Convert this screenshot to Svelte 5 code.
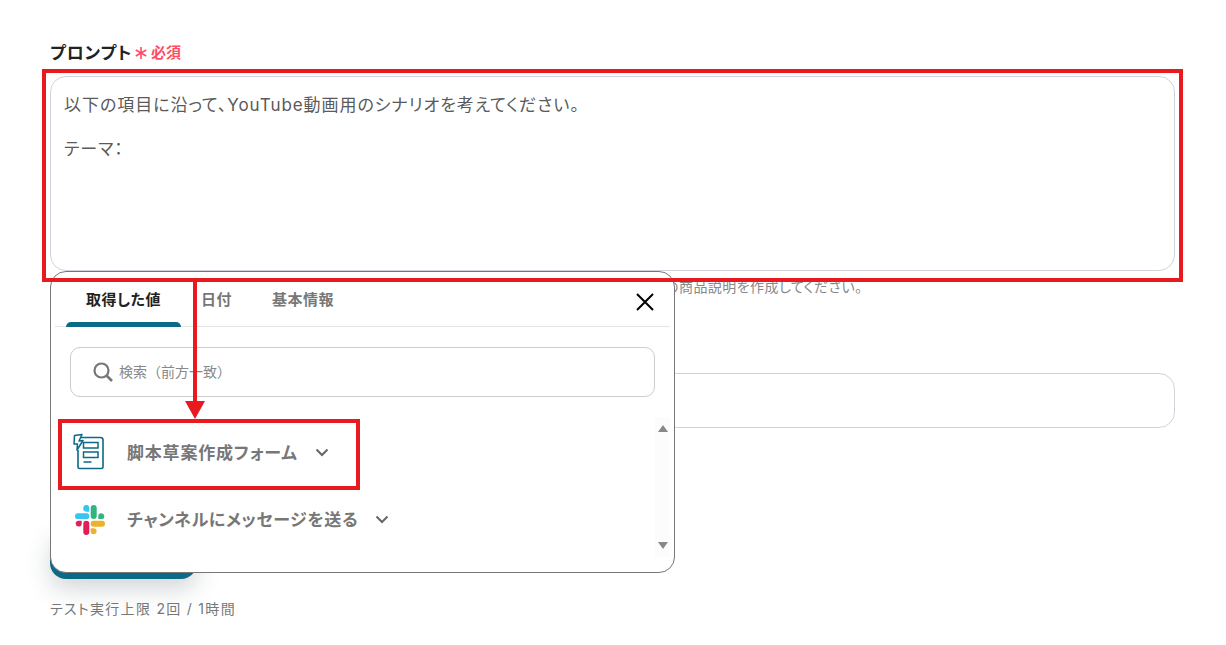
<script>
  const tabs = [
    { label: '取得した値', active: true },
    { label: '日付', active: false },
    { label: '基本情報', active: false }
  ];
</script>

<main class="page">
  <div class="label-row">
    <span class="label">プロンプト</span>
    <svg class="star" width="12" height="12" viewBox="0 0 12 12"><path d="M6 0v12M.8 3 11.200 9M11.200 3 .8 9" stroke="#ff4d63" stroke-width="1.600" fill="none"/></svg>
    <span class="req">必須</span>
  </div>
  <div class="textarea">
    <p>以下の項目に沿って、YouTube動画用のシナリオを考えてください。</p>
    <p>テーマ：</p>
  </div>
  <p class="hint">の商品説明を作成してください。</p>
  <div class="field"></div>
  <div class="run"></div>
  <p class="limit">テスト実行上限 2回 / 1時間</p>

  <section class="popup">
    <div class="tabs">
      {#each tabs as t}
        <div class="tab" class:active={t.active}>{t.label}</div>
      {/each}
      <svg class="close" width="20" height="20" viewBox="0 0 20 20"><path d="M2 2 18 18M18 2 2 18" stroke="#000" stroke-width="2" fill="none"/></svg>
    </div>
    <div class="search">
      <svg width="22" height="22" viewBox="0 0 22 22"><circle cx="9.500" cy="9.500" r="7" stroke="#777" stroke-width="2.200" fill="none"/><path d="M14.500 14.500 20 20" stroke="#777" stroke-width="2.600" fill="none"/></svg>
      <span>検索（前方一致）</span>
    </div>
    <div class="list">
      <div class="item">
        <svg class="icon" width="32" height="38" viewBox="0 0 32 38">
          <path d="M7 4.500h20.500a2.500 2.500 0 0 1 2.500 2.500V34a1.500 1.500 0 0 1-1.500 1.500H6.500a1.500 1.500 0 0 1-1.500-1.500V17" fill="none" stroke="#0b6a85" stroke-width="1.600"/>
          <path d="M1.500 2.500 9 1.500 6 8 10 7.500 4 17 4.500 11 1 11Z" fill="#fff" stroke="#0b6a85" stroke-width="1.500" stroke-linejoin="round"/>
          <rect x="10.500" y="9.500" width="14.500" height="5.500" fill="none" stroke="#0b6a85" stroke-width="1.500"/>
          <rect x="10.500" y="19" width="14.500" height="5.500" fill="none" stroke="#0b6a85" stroke-width="1.500"/>
          <path d="M10.500 29h8" stroke="#0b6a85" stroke-width="1.500"/>
        </svg>
        <span class="name">脚本草案作成フォーム</span>
        <svg class="chev" width="14" height="9" viewBox="0 0 14 9"><path d="M1.500 1.500 7 7l5.500-5.500" stroke="#666" stroke-width="2" fill="none"/></svg>
      </div>
      <div class="item second">
        <svg class="icon slack" width="30" height="30" viewBox="0 0 30 30">
          <rect x="0" y="8.300" width="14.300" height="5.800" rx="2.900" fill="#36c5f0"/>
          <path d="M14.300 6.700V2.900a3 3 0 1 0-6 .0 3 3 0 0 0 3 3.800Z" fill="#36c5f0"/>
          <rect x="15.700" y="0" width="6" height="14.100" rx="3" fill="#2eb67d"/>
          <path d="M23.300 14.100H27a3 3 0 1 0-3.700-3Z" fill="#2eb67d"/>
          <rect x="15.700" y="15.700" width="14.300" height="6" rx="3" fill="#ecb22e"/>
          <path d="M15.700 23.300V27a3 3 0 1 0 3-3.700Z" fill="#ecb22e"/>
          <rect x="8.300" y="15.700" width="6" height="14.300" rx="3" fill="#e01e5a"/>
          <path d="M6.700 15.700H3a3 3 0 1 0 3.700 3Z" fill="#e01e5a"/>
        </svg>
        <span class="name">チャンネルにメッセージを送る</span>
        <svg class="chev" width="14" height="9" viewBox="0 0 14 9"><path d="M1.500 1.500 7 7l5.500-5.500" stroke="#666" stroke-width="2" fill="none"/></svg>
      </div>
    </div>
    <div class="scroll">
      <i class="up"></i>
      <i class="down"></i>
    </div>
  </section>

  <div class="mark mark-a"></div>
  <div class="mark mark-b"></div>
  <div class="arrow"></div>
</main>

<style>
  :global(body) {
    margin: 0;
    background: #fff;
  }
  .page {
    position: relative;
    box-sizing: border-box;
    height: 645px;
    padding: 40px 51px 0 50px;
    overflow: hidden;
    font-family: Inter, "Noto Sans CJK JP", sans-serif;
    font-feature-settings: "palt";
  }
  .label-row {
    display: flex;
    align-items: center;
    height: 22px;
    margin-bottom: 14px;
  }
  .label {
    font-size: 17px;
    font-weight: 700;
    color: #222;
    letter-spacing: 0.8px;
  }
  .star {
    margin-left: 3px;
    margin-top: 4px;
  }
  .req {
    margin-left: 4px;
    margin-top: 1px;
    color: #ff4d63;
    font-size: 15px;
    font-weight: 700;
  }
  .textarea {
    box-sizing: border-box;
    height: 195px;
    padding: 14px 13px;
    border: 1px solid #d0d4da;
    border-radius: 16px;
    color: #5a5a5a;
    font-size: 17px;
    letter-spacing: 0.95px;
    line-height: 28px;
  }
  .textarea p {
    margin: 0 0 16px;
  }
  .hint {
    margin: 6px 0 0 615px;
    height: 20px;
    color: #888;
    font-size: 14px;
    line-height: 20px;
    white-space: nowrap;
    letter-spacing: 0.45px;
  }
  .field {
    box-sizing: border-box;
    height: 55px;
    margin-top: 76px;
    border: 1px solid #d0d4da;
    border-radius: 16px;
  }
  .run {
    width: 147px;
    height: 50px;
    margin-top: 101px;
    border-radius: 16px;
    background: #0b6a85;
    box-shadow: 0 10px 24px rgba(30, 50, 60, 0.2);
  }
  .limit {
    margin: 20px 0 0;
    color: #777;
    font-size: 14px;
    letter-spacing: 1.300px;
    line-height: 20px;
  }
  .popup {
    position: absolute;
    left: 50px;
    top: 271px;
    box-sizing: border-box;
    width: 625px;
    height: 302px;
    border: 1px solid #777;
    border-radius: 16px;
    background: #fff;
  }
  .tabs {
    position: relative;
    display: flex;
    height: 54px;
    margin: 0 4px;
    border-bottom: 1px solid #e5e5e5;
  }
  .tab {
    position: relative;
    box-sizing: border-box;
    height: 55px;
    padding: 18px 0 0;
    margin-left: 40px;
    font-size: 15px;
    font-weight: 700;
    color: #777;
    letter-spacing: 0.5px;
    line-height: 20px;
  }
  .tab.active {
    margin-left: 11px;
    width: 115px;
    color: #222;
    text-align: center;
  }
  .tab.active::after {
    content: "";
    position: absolute;
    left: 0;
    right: 0;
    bottom: 0;
    height: 5px;
    border-radius: 5px 5px 0 0;
    background: #0b6a85;
  }
  .tab.active + .tab {
    margin-left: 20px;
  }
  .close {
    position: absolute;
    right: 15px;
    top: 20px;
  }
  .search {
    display: flex;
    align-items: center;
    gap: 5px;
    box-sizing: border-box;
    height: 50px;
    margin: 20px 19px 0;
    padding-left: 21px;
    border: 1px solid #ccc;
    border-radius: 10px;
    color: #888;
    font-size: 14px;
    font-feature-settings: normal;
  }
  .search span {
    margin-top: -2px;
  }
  .list {
    margin-top: 19px;
  }
  .item {
    display: flex;
    align-items: center;
    height: 70px;
    padding-left: 22px;
  }
  .second {
    height: 65px;
  }
  .icon {
    flex: none;
    width: 32px;
    margin-top: 2px;
    margin-right: 22px;
  }
  .slack {
    width: 30px;
    margin-left: 2px;
    margin-right: 22px;
  }
  .name {
    color: #777;
    font-size: 17px;
    font-weight: 700;
    letter-spacing: 0.8px;
  }
  .second .name {
    letter-spacing: 0.6px;
  }
  .chev {
    margin-left: 17px;
    margin-top: 2px;
  }
  .scroll {
    position: absolute;
    right: 4px;
    top: 145px;
    width: 15px;
    height: 140px;
    background: #fcfcfc;
  }
  .scroll i {
    position: absolute;
    left: 3px;
    border-left: 5px solid transparent;
    border-right: 5px solid transparent;
  }
  .up {
    top: 8px;
    border-bottom: 7px solid #888;
  }
  .down {
    bottom: 8px;
    border-top: 7px solid #888;
  }
  .mark {
    position: absolute;
    box-sizing: border-box;
    border: 4px solid #e8191f;
  }
  .mark-a {
    left: 42px;
    top: 69px;
    width: 1141px;
    height: 213px;
  }
  .mark-b {
    left: 58px;
    top: 419px;
    width: 302px;
    height: 71px;
  }
  .arrow {
    position: absolute;
    left: 193px;
    top: 281px;
    width: 3.500px;
    height: 122px;
    background: #e8191f;
  }
  .arrow::after {
    content: "";
    position: absolute;
    left: -8.250px;
    top: 120px;
    border-left: 10px solid transparent;
    border-right: 10px solid transparent;
    border-top: 18px solid #e8191f;
  }
</style>
